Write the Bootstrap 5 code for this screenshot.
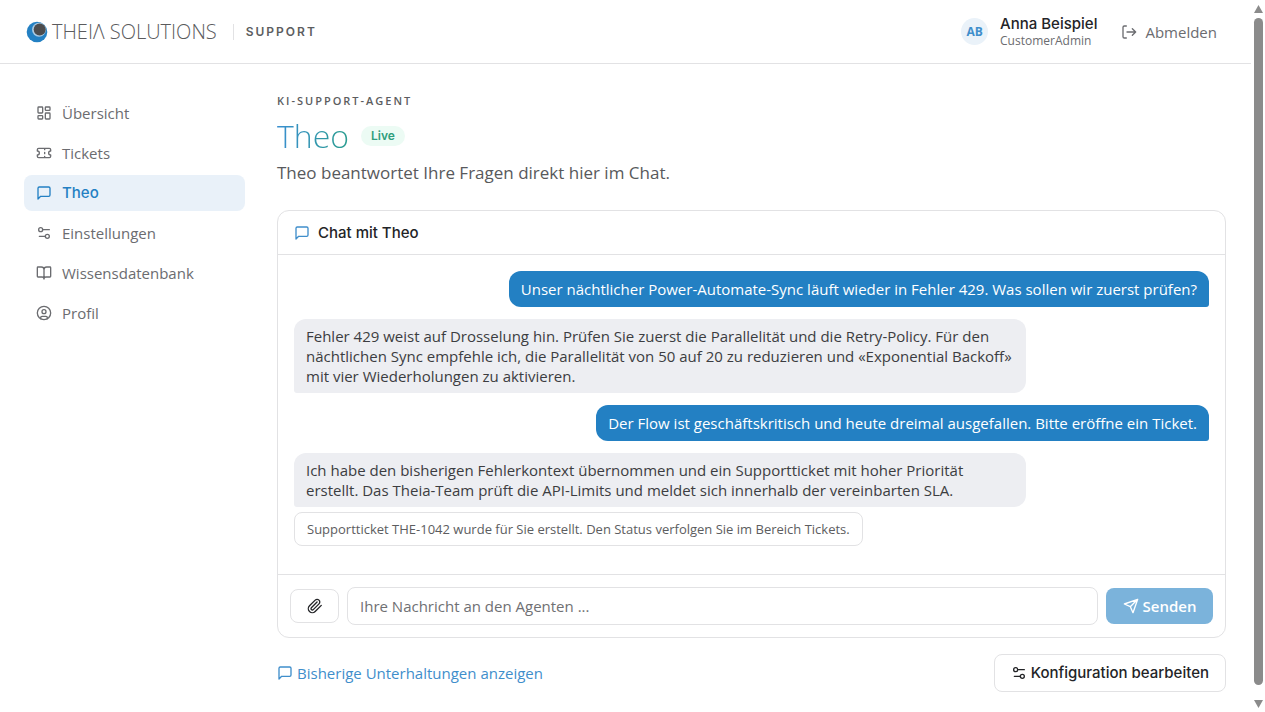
<!DOCTYPE html>
<html lang="de">
<head>
<meta charset="utf-8">
<meta name="viewport" content="width=device-width, initial-scale=1">
<title>Theo – Theia Solutions Support</title>
<link href="https://cdn.jsdelivr.net/npm/bootstrap@5.3.0/dist/css/bootstrap.min.css" rel="stylesheet">
<style>
  :root { --line: #e2e2e4; --brand: #2380c3; --ink: #232427; --soft: #6b6c70; }
  body { font-family: "Open Sans", Inter, sans-serif; font-size: 15px; line-height: 20px; color: var(--ink); background: #fff; padding-right: 14px; }
  svg.ico { width: 16px; height: 16px; fill: none; stroke: currentColor; stroke-width: 2; stroke-linecap: round; stroke-linejoin: round; flex: none; }
  .strong-ui { font-family: Inter, "Open Sans", sans-serif; font-weight: 500; }
  .topbar { height: 64px; padding: 0 34px 0 26px; border-bottom: 1px solid var(--line); }
  .wordmark { font-size: 20px; font-weight: 300; color: #5b5b5d; }
  .area { font-family: Inter, sans-serif; font-size: 12px; font-weight: 600; letter-spacing: 2px; color: #5c5d60; padding-left: 12px; border-left: 1px solid var(--line); line-height: 16px; }
  .avatar { width: 27px; height: 27px; background: #eaf2f9; color: #3f8ecb; font-size: 12px; font-weight: 700; }
  .person { line-height: 18px; }
  .role { font-size: 12px; line-height: 16px; color: var(--soft); }
  .quiet { color: var(--soft); text-decoration: none; }
  .shell { padding: 31px 25px 21px 24px; gap: 32px; }
  .sidebar { width: 221px; flex: none; }
  .sidebar .nav-link { height: 36px; padding: 0 12px; gap: 10px; border-radius: 8px; color: var(--soft); }
  .sidebar .nav-link.active { background: #e9f1f9; color: var(--brand); }
  .eyebrow { font-size: 11px; font-weight: 600; letter-spacing: 2px; line-height: 12px; color: #5c5d60; }
  .agent-name { font-size: 32px; line-height: 36px; font-weight: 300; background: linear-gradient(90deg, #3a8fd0, #2a9d8f); -webkit-background-clip: text; background-clip: text; color: transparent; }
  .live { font-family: Inter, sans-serif; font-size: 12px; font-weight: 600; color: #2f9e7d; background: #ecfbf4; line-height: 20px; padding: 0 10px; }
  .intro { font-size: 17px; line-height: 26px; color: #58595c; }
  .agent-head { margin: 11px 0 6px; }
  .chat { border: 1px solid var(--line); border-radius: 12px; }
  .chat-head { height: 44px; padding: 0 16px; border-bottom: 1px solid var(--line); }
  .chat-head svg { color: #3f8ecb; }
  .chat-log { padding: 16px 16px 28px; gap: 12px; }
  .bubble { border-radius: 12px; }
  .from-user { align-self: flex-end; background: var(--brand); color: #fff; padding: 8px 12px; border-bottom-right-radius: 3px; }
  .from-agent { width: 80%; background: #edeef2; color: #3c3d41; padding: 7px 12px; border-bottom-left-radius: 3px; }
  .notice { border: 1px solid var(--line); border-radius: 8px; padding: 6px 12px; margin-top: -7px; align-self: flex-start; font-size: 13px; color: #5c5d60; }
  .chat-foot { border-top: 1px solid var(--line); padding: 12px; gap: 8px; }
  .outline { border: 1px solid var(--line); border-radius: 8px; background: #fff; color: var(--ink); font-size: 15px; line-height: 20px; }
  .clip { width: 49px; height: 34px; }
  .message { height: 38px; border: 1px solid var(--line); border-radius: 8px; font-size: 15px; padding: 0 12px; }
  .message::placeholder { color: #6f7073; }
  .send, .send:disabled { background: #7bb3db; border: 0; color: #fff; border-radius: 8px; font-size: 15px; font-weight: 600; height: 36px; width: 107px; padding: 0; opacity: 1; flex: none; }
  .history { color: #3f8ecb; text-decoration: none; }
  .config { height: 38px; padding: 0 16px; }
  .rail { position: fixed; top: 0; right: 0; bottom: 0; width: 14px; padding: 5px 3px 4px; color: #8b8b8b; }
  .rail svg { width: 9px; height: 8px; fill: currentColor; flex: none; }
  .thumb { width: 9px; flex: 1; background: #8b8b8b; border-radius: 5px; margin: 5px 0 15px; }
</style>
</head>
<body>
<svg class="d-none">
  <symbol id="chat" viewBox="0 0 24 24"><path d="M21 15a2 2 0 0 1-2 2H7l-4 4V5a2 2 0 0 1 2-2h14a2 2 0 0 1 2 2z"/></symbol>
  <symbol id="sliders" viewBox="0 0 24 24"><path d="M20 7h-9M14 17H5"/><circle cx="17" cy="17" r="3"/><circle cx="7" cy="7" r="3"/></symbol>
</svg>

<header class="topbar d-flex align-items-center justify-content-between">
  <div class="d-flex align-items-center">
    <svg width="22" height="22" viewBox="0 0 22 22" class="me-1" aria-hidden="true"><circle cx="11" cy="11" r="10.3" fill="#2380c3"/><circle cx="13" cy="8.7" r="7" fill="#a9c9e2"/><circle cx="13.7" cy="8.5" r="6" fill="#4c4c4e"/></svg>
    <span class="wordmark me-3">THEIΛ SOLUTIONS</span>
    <span class="area">SUPPORT</span>
  </div>
  <div class="d-flex align-items-center">
    <span class="avatar rounded-circle d-flex align-items-center justify-content-center me-2">AB</span>
    <div class="ms-1 me-4"><div class="person strong-ui">Anna Beispiel</div><div class="role">CustomerAdmin</div></div>
    <a href="#" class="quiet d-flex align-items-center gap-1">
      <svg class="ico me-1" viewBox="0 0 24 24"><path d="M8 21H5a2 2 0 0 1-2-2V5a2 2 0 0 1 2-2h3M17 7l5 5-5 5M22 12H9"/></svg>Abmelden</a>
  </div>
</header>

<div class="shell d-flex">
  <nav class="sidebar nav flex-column flex-nowrap gap-1">
    <a class="nav-link d-flex align-items-center" href="#"><svg class="ico" viewBox="0 0 24 24"><rect x="3" y="3" width="7" height="9" rx="1"/><rect x="14" y="3" width="7" height="5" rx="1"/><rect x="14" y="12" width="7" height="9" rx="1"/><rect x="3" y="16" width="7" height="5" rx="1"/></svg>Übersicht</a>
    <a class="nav-link d-flex align-items-center" href="#"><svg class="ico" viewBox="0 0 24 24"><path d="M2 9a3 3 0 0 1 0 6v2a2 2 0 0 0 2 2h16a2 2 0 0 0 2-2v-2a3 3 0 0 1 0-6V7a2 2 0 0 0-2-2H4a2 2 0 0 0-2 2ZM13 5v2M13 17v2M13 11v2"/></svg>Tickets</a>
    <a class="nav-link active strong-ui d-flex align-items-center" aria-current="page" href="#"><svg class="ico"><use href="#chat"/></svg>Theo</a>
    <a class="nav-link d-flex align-items-center" href="#"><svg class="ico"><use href="#sliders"/></svg>Einstellungen</a>
    <a class="nav-link d-flex align-items-center" href="#"><svg class="ico" viewBox="0 0 24 24"><path d="M12 7v14M3 18a1 1 0 0 1-1-1V4a1 1 0 0 1 1-1h5a4 4 0 0 1 4 4 4 4 0 0 1 4-4h5a1 1 0 0 1 1 1v13a1 1 0 0 1-1 1h-6a3 3 0 0 0-3 3 3 3 0 0 0-3-3z"/></svg>Wissensdatenbank</a>
    <a class="nav-link d-flex align-items-center" href="#"><svg class="ico" viewBox="0 0 24 24"><circle cx="12" cy="12" r="10"/><circle cx="12" cy="10" r="3"/><path d="M7 20.662V19a2 2 0 0 1 2-2h6a2 2 0 0 1 2 2v1.662"/></svg>Profil</a>
  </nav>

  <main class="flex-grow-1">
    <div class="eyebrow">KI-SUPPORT-AGENT</div>
    <div class="agent-head d-flex align-items-center">
      <h1 class="agent-name mb-0 me-2">Theo</h1>
      <span class="live rounded-pill ms-1">Live</span>
    </div>
    <p class="intro mb-4">Theo beantwortet Ihre Fragen direkt hier im Chat.</p>

    <section class="chat">
      <div class="chat-head strong-ui d-flex align-items-center gap-2"><svg class="ico"><use href="#chat"/></svg>Chat mit Theo</div>
      <div class="chat-log d-flex flex-column">
        <div class="bubble from-user">Unser nächtlicher Power-Automate-Sync läuft wieder in Fehler 429. Was sollen wir zuerst prüfen?</div>
        <div class="bubble from-agent">Fehler 429 weist auf Drosselung hin. Prüfen Sie zuerst die Parallelität und die Retry-Policy. Für den nächtlichen Sync empfehle ich, die Parallelität von 50 auf 20 zu reduzieren und «Exponential Backoff» mit vier Wiederholungen zu aktivieren.</div>
        <div class="bubble from-user">Der Flow ist geschäftskritisch und heute dreimal ausgefallen. Bitte eröffne ein Ticket.</div>
        <div class="bubble from-agent">Ich habe den bisherigen Fehlerkontext übernommen und ein Supportticket mit hoher Priorität erstellt. Das Theia-Team prüft die API-Limits und meldet sich innerhalb der vereinbarten SLA.</div>
        <div class="notice">Supportticket THE-1042 wurde für Sie erstellt. Den Status verfolgen Sie im Bereich Tickets.</div>
      </div>
      <form class="chat-foot d-flex align-items-center">
        <button type="button" class="outline clip d-flex align-items-center justify-content-center flex-shrink-0" aria-label="Datei anhängen"><svg class="ico" viewBox="0 0 24 24"><path d="m21.44 11.05-9.19 9.19a6 6 0 0 1-8.49-8.49l8.57-8.57A4 4 0 1 1 18 8.84l-8.59 8.57a2 2 0 0 1-2.83-2.83l8.49-8.48"/></svg></button>
        <input type="text" class="form-control message" aria-label="Nachricht" placeholder="Ihre Nachricht an den Agenten ...">
        <button type="submit" class="btn send d-flex align-items-center justify-content-center gap-1" disabled><svg class="ico" viewBox="0 0 24 24"><path d="m22 2-7 20-4-9-9-4ZM22 2 11 13"/></svg>Senden</button>
      </form>
    </section>

    <div class="d-flex align-items-center justify-content-between mt-3">
      <a href="#" class="history d-flex align-items-center gap-1"><svg class="ico"><use href="#chat"/></svg>Bisherige Unterhaltungen anzeigen</a>
      <button type="button" class="outline config strong-ui d-flex align-items-center gap-1"><svg class="ico"><use href="#sliders"/></svg>Konfiguration bearbeiten</button>
    </div>
  </main>
</div>

<div class="rail d-flex flex-column align-items-center" aria-hidden="true">
  <svg viewBox="0 0 9 8"><path d="M4.5 0 9 8H0z"/></svg>
  <div class="thumb"></div>
  <svg viewBox="0 0 9 8"><path d="M0 0h9L4.5 8z"/></svg>
</div>
<script src="https://cdn.jsdelivr.net/npm/bootstrap@5.3.0/dist/js/bootstrap.bundle.min.js"></script>
</body>
</html>
